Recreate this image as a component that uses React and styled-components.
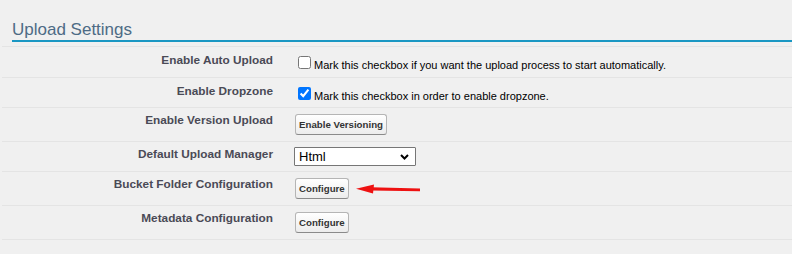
import React from 'react';
import styled, { createGlobalStyle } from 'styled-components';

const GlobalStyle = createGlobalStyle`
  html, body {
    margin: 0;
    padding: 0;
    background: #f0f0f0;
  }
  body {
    font-family: 'Liberation Sans', Arial, sans-serif;
  }
`;

const Page = styled.div`
  width: 792px;
  height: 254px;
  padding-top: 20px;
  box-sizing: border-box;
  background: #f0f0f0;
  overflow: hidden;
`;

const SectionTitle = styled.h3`
  margin: 0 0 4px 12px;
  padding: 0 0 1px 0;
  font-size: 17px;
  line-height: 19px;
  font-weight: normal;
  color: #4d6b85;
  border-bottom: 2px solid #1a97c3;
`;

const FieldList = styled.div`
  margin-left: 2px;
  display: flex;
  flex-direction: column;
`;

const Row = styled.div`
  display: grid;
  grid-template-columns: 282px 1fr;
  align-items: start;
  box-sizing: border-box;
  height: ${p => p.$h}px;
  border-top: 1px solid #e4e4e4;
  &:last-child {
    height: ${p => p.$h + 1}px;
    border-bottom: 1px solid #e4e4e4;
  }
`;

const Label = styled.div`
  text-align: right;
  padding: ${p => p.$top}px 11px 0 0;
  font-size: 11.8px;
  line-height: 14px;
  font-weight: bold;
  color: #4a4a56;
`;

const Data = styled.div`
  padding: ${p => p.$top}px 0 0 10px;
  font-size: 11px;
  color: #000;
  display: flex;
  align-items: ${p => (p.$inline ? 'baseline' : 'center')};
`;

const CheckLine = styled.div`
  font-size: 11px;
  line-height: normal;
  color: #000;
`;

const Check = styled.input.attrs({ type: 'checkbox', readOnly: true })`
  width: 13px;
  height: 13px;
  margin: 0 3px 0 4px;
  vertical-align: baseline;
`;

const Button = styled.button`
  font-family: 'Liberation Sans', Arial, sans-serif;
  font-size: 9.7px;
  font-weight: bold;
  line-height: 13px;
  color: #333;
  padding: 3px 3px;
  margin: 0 0 0 1px;
  border: 1px solid #b5b5b5;
  border-bottom-color: #8a8a8a;
  border-radius: 3px;
  background: linear-gradient(#ffffff, #ececec);
  cursor: pointer;
`;

const SelectWrap = styled.div`
  position: relative;
  width: 122px;
  height: 19px;
`;

const Select = styled.select`
  appearance: none;
  -webkit-appearance: none;
  width: 122px;
  height: 19px;
  box-sizing: border-box;
  border: 1px solid #767676;
  border-radius: 1px;
  background: #fff;
  font-family: 'Liberation Sans', Arial, sans-serif;
  font-size: 13px;
  color: #000;
  padding: 0 0 0 4px;
  margin: 0;
`;

const Chevron = styled.svg`
  position: absolute;
  right: 7px;
  top: 7px;
  pointer-events: none;
`;

const Pointer = styled.svg`
  margin-left: 6px;
  align-self: center;
`;

const Arrow = () => (
  <Pointer width="68" height="12" viewBox="0 0 68 12">
    <path d="M16 4.2 L65 5.4 L65 8.2 L16 7.6 Z" fill="#ee1111" />
    <path d="M1 5.8 L19 1.5 L18 10.5 Z" fill="#ee1111" />
  </Pointer>
);

const App = () => {
  return (
    <Page>
      <GlobalStyle />
      <SectionTitle>Upload Settings</SectionTitle>

      <FieldList>
        <Row $h={31}>
          <Label $top={6}>Enable Auto Upload</Label>
          <Data $top={9}>
            <CheckLine>
              <Check />
              Mark this checkbox if you want the upload process to start automatically.
            </CheckLine>
          </Data>
        </Row>

        <Row $h={30}>
          <Label $top={6}>Enable Dropzone</Label>
          <Data $top={9}>
            <CheckLine>
              <Check defaultChecked />
              Mark this checkbox in order to enable dropzone.
            </CheckLine>
          </Data>
        </Row>

        <Row $h={34}>
          <Label $top={5}>Enable Version Upload</Label>
          <Data $top={6}>
            <Button>Enable Versioning</Button>
          </Data>
        </Row>

        <Row $h={30}>
          <Label $top={5}>Default Upload Manager</Label>
          <Data $top={5}>
            <SelectWrap>
              <Select defaultValue="Html">
                <option>Html</option>
                <option>Flash</option>
              </Select>
              <Chevron width="9" height="6" viewBox="0 0 9 6">
                <path d="M1 1 L4.5 4.5 L8 1" stroke="#000" strokeWidth="2" fill="none" />
              </Chevron>
            </SelectWrap>
          </Data>
        </Row>

        <Row $h={34}>
          <Label $top={5}>Bucket Folder Configuration</Label>
          <Data $top={6}>
            <Button>Configure</Button>
            <Arrow />
          </Data>
        </Row>

        <Row $h={34}>
          <Label $top={5}>Metadata Configuration</Label>
          <Data $top={6}>
            <Button>Configure</Button>
          </Data>
        </Row>
      </FieldList>
    </Page>
  );
};

export default App;
